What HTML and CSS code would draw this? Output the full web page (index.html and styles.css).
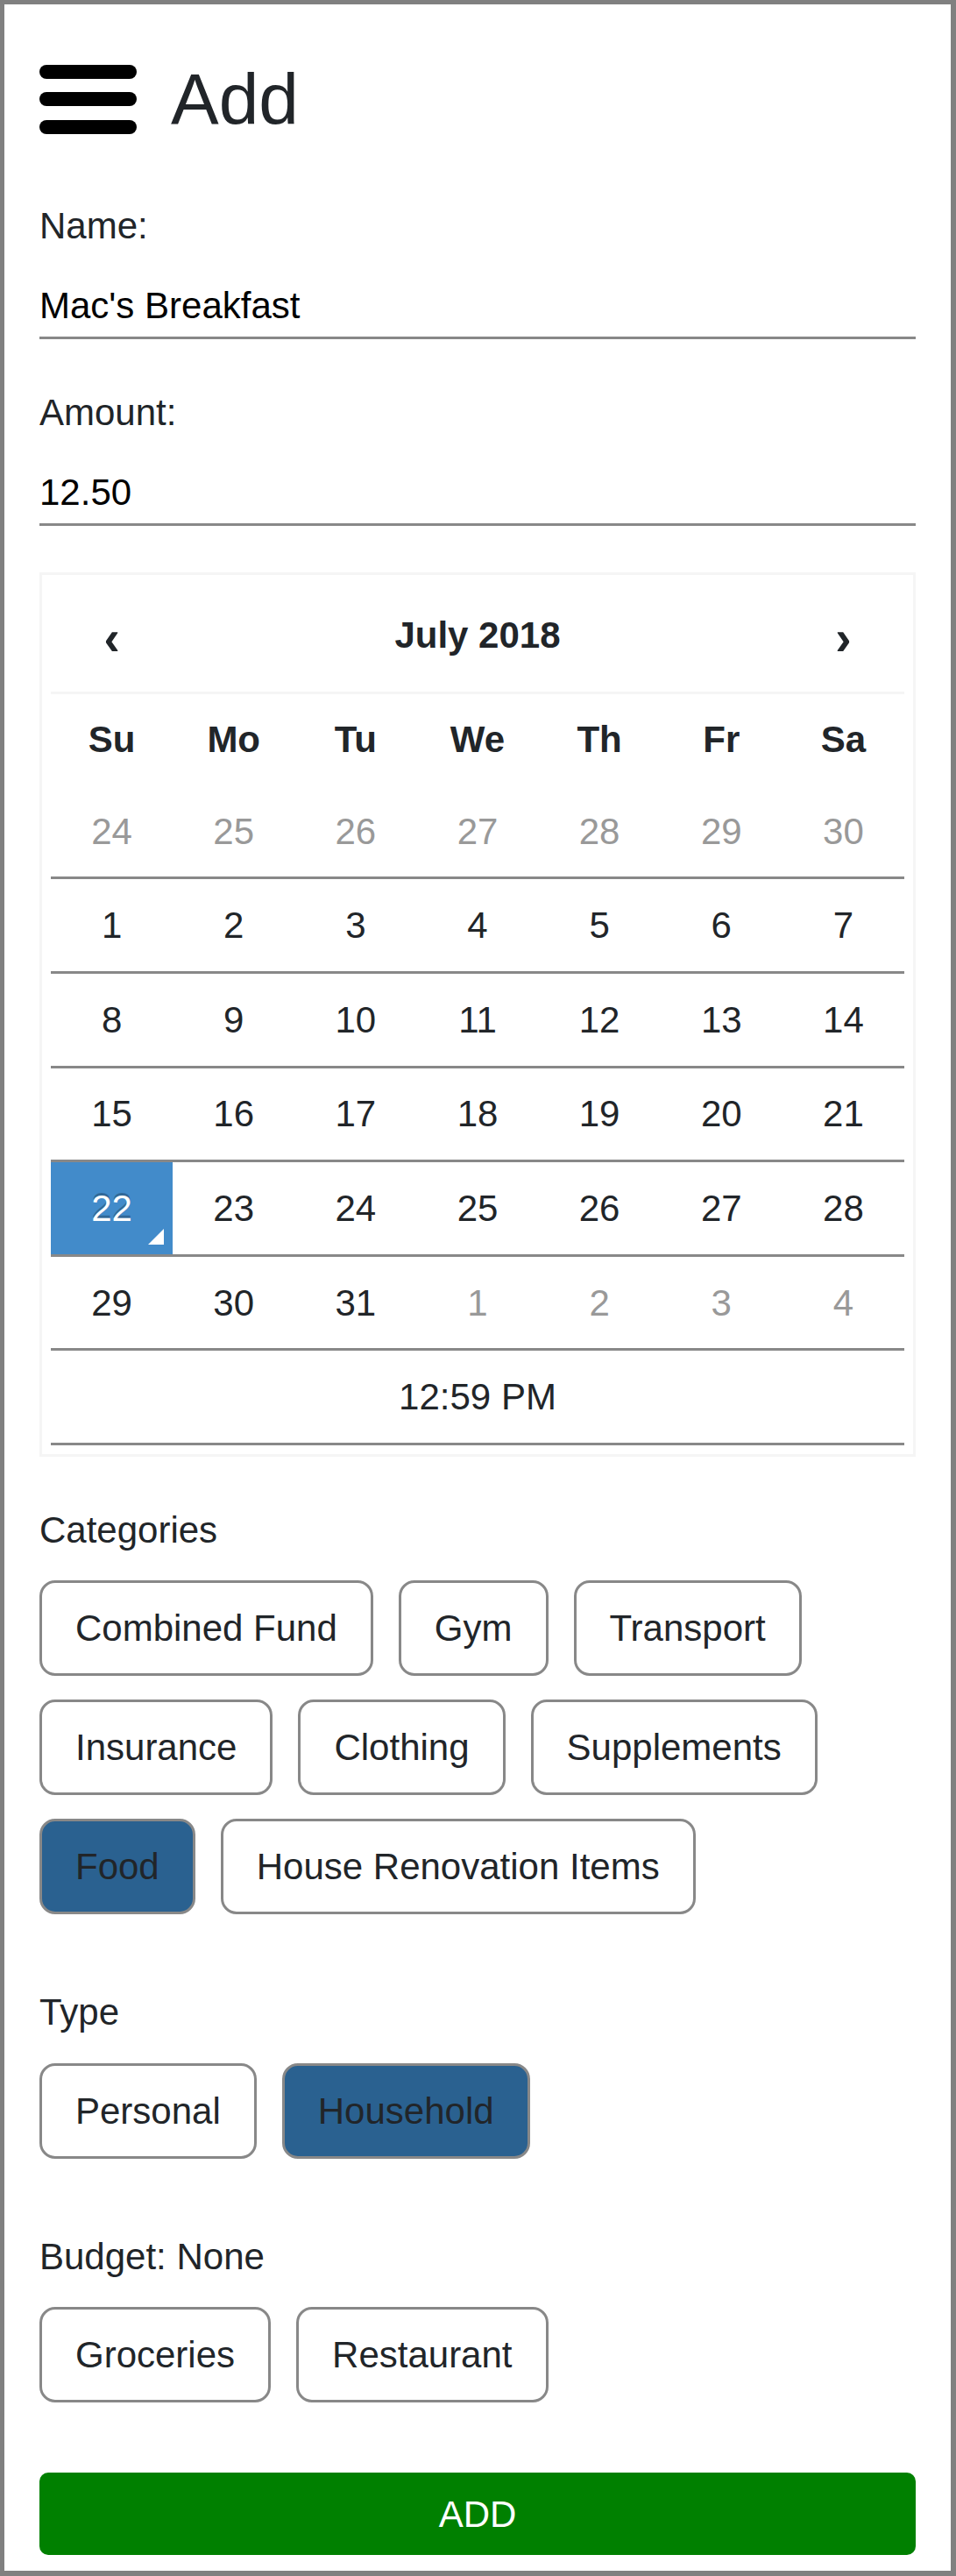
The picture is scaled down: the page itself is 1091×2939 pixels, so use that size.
FILE: index.html
```html
<!DOCTYPE html>
<html lang="en">
<head>
<meta charset="utf-8">
<title>Add</title>
<link rel="stylesheet" href="styles.css">
</head>
<body>
<div class="page">
  <header class="topbar">
    <svg class="menu-icon" width="111" height="79" viewBox="0 0 111 79" aria-hidden="true">
      <rect x="0" y="0" width="111" height="16" rx="8"/>
      <rect x="0" y="31" width="111" height="16" rx="8"/>
      <rect x="0" y="63" width="111" height="16" rx="8"/>
    </svg>
    <h1 class="title">Add</h1>
  </header>

  <div class="field-group">
    <label class="label" for="name">Name:</label>
    <input class="field" id="name" type="text" value="Mac's Breakfast">
  </div>

  <div class="field-group">
    <label class="label" for="amount">Amount:</label>
    <input class="field" id="amount" type="text" value="12.50">
  </div>

  <div class="picker">
    <div class="cal-head">
      <span class="nav">&lsaquo;</span>
      <span class="switch">July 2018</span>
      <span class="nav">&rsaquo;</span>
    </div>
    <div class="cal-dow">
      <span>Su</span><span>Mo</span><span>Tu</span><span>We</span><span>Th</span><span>Fr</span><span>Sa</span>
    </div>
    <div class="cal-week">
      <span class="day old">24</span><span class="day old">25</span><span class="day old">26</span><span class="day old">27</span><span class="day old">28</span><span class="day old">29</span><span class="day old">30</span>
    </div>
    <div class="cal-week">
      <span class="day">1</span><span class="day">2</span><span class="day">3</span><span class="day">4</span><span class="day">5</span><span class="day">6</span><span class="day">7</span>
    </div>
    <div class="cal-week">
      <span class="day">8</span><span class="day">9</span><span class="day">10</span><span class="day">11</span><span class="day">12</span><span class="day">13</span><span class="day">14</span>
    </div>
    <div class="cal-week">
      <span class="day">15</span><span class="day">16</span><span class="day">17</span><span class="day">18</span><span class="day">19</span><span class="day">20</span><span class="day">21</span>
    </div>
    <div class="cal-week">
      <span class="day active today">22</span><span class="day">23</span><span class="day">24</span><span class="day">25</span><span class="day">26</span><span class="day">27</span><span class="day">28</span>
    </div>
    <div class="cal-week">
      <span class="day">29</span><span class="day">30</span><span class="day">31</span><span class="day old">1</span><span class="day old">2</span><span class="day old">3</span><span class="day old">4</span>
    </div>
    <div class="cal-time">12:59 PM</div>
  </div>

  <div class="group">
    <div class="label">Categories</div>
    <div class="chips">
      <button class="chip">Combined Fund</button>
      <button class="chip">Gym</button>
      <button class="chip">Transport</button>
      <button class="chip">Insurance</button>
      <button class="chip">Clothing</button>
      <button class="chip">Supplements</button>
      <button class="chip selected">Food</button>
      <button class="chip">House Renovation Items</button>
    </div>
  </div>

  <div class="group">
    <div class="label">Type</div>
    <div class="chips">
      <button class="chip">Personal</button>
      <button class="chip selected">Household</button>
    </div>
  </div>

  <div class="group">
    <div class="label">Budget: None</div>
    <div class="chips">
      <button class="chip">Groceries</button>
      <button class="chip">Restaurant</button>
    </div>
  </div>

  <button class="submit">ADD</button>
</div>
</body>
</html>
```

FILE: styles.css
```css
html, body {
  margin: 0;
  padding: 0;
  background: #ffffff;
}

body {
  font-family: "Liberation Sans", Arial, sans-serif;
  font-size: 42px;
  line-height: 63px;
  color: #212529;
}

.page {
  box-sizing: border-box;
  min-height: 100vh;
  border-style: solid;
  border-color: #808080;
  border-width: 5px 6px 6px 5px;
  padding: 59px 40px 16px 40px;
  display: flex;
  flex-direction: column;
}

/* header */
.topbar {
  display: flex;
  align-items: center;
  gap: 39px;
  margin-bottom: 63.4px;
}

.menu-icon {
  display: block;
  fill: #000000;
  flex: none;
}

.title {
  margin: 0;
  font-size: 82px;
  line-height: 98.4px;
  font-weight: 400;
  color: #212529;
}

/* text fields */
.label {
  display: block;
  font-size: 42px;
  line-height: 63px;
  color: #212529;
}

.field-group {
  margin-bottom: 52.5px;
}

.field-group .label {
  margin-bottom: 28px;
}

.field {
  display: block;
  box-sizing: content-box;
  width: 100%;
  height: 63px;
  margin: 0;
  padding: 0 0 4px 0;
  border: 0;
  border-bottom: 3px solid #888888;
  border-radius: 0;
  background: transparent;
  font-family: "Liberation Sans", Arial, sans-serif;
  font-size: 42px;
  line-height: 63px;
  color: #000000;
  outline: none;
}

/* date picker */
.picker {
  border: 3px solid #f5f5f5;
  padding: 10px;
  margin-bottom: 52px;
}

.cal-head,
.cal-dow,
.cal-week {
  display: grid;
  grid-template-columns: repeat(7, 1fr);
}

.cal-head {
  height: 123px;
  border-bottom: 3px solid #f5f5f5;
  align-items: center;
  font-weight: 700;
}

.cal-head .nav {
  text-align: center;
  font-size: 55px;
  line-height: 63px;
  padding-top: 2px;
}

.cal-head .switch {
  grid-column: span 5;
  text-align: center;
  padding-bottom: 6px;
}

.cal-dow {
  height: 104px;
  align-items: center;
  font-weight: 700;
}

.cal-dow span {
  text-align: center;
}

.day {
  position: relative;
  height: 104.6px;
  border-bottom: 3px solid #888888;
  display: flex;
  align-items: center;
  justify-content: center;
  color: #212529;
}

.day.old {
  color: #999999;
}

.day.active {
  background: #428bca;
  color: #ffffff;
  text-shadow: 0 -2.6px 0 rgba(0, 0, 0, 0.25);
}

.day.today::before {
  content: "";
  position: absolute;
  right: 10px;
  bottom: 10.5px;
  border-left: 18px solid transparent;
  border-bottom: 18px solid #ffffff;
}

.cal-time {
  height: 104.6px;
  border-bottom: 3px solid #888888;
  display: flex;
  align-items: center;
  justify-content: center;
}

/* chip groups */
.group {
  margin-bottom: 53px;
}

.group .label {
  margin-bottom: 26.5px;
}

.chips {
  display: flex;
  flex-wrap: wrap;
  gap: 27px 29px;
  padding-bottom: 27px;
}

.chip {
  box-sizing: border-box;
  margin: 0;
  padding: 20px 38px;
  border: 3px solid #888888;
  border-radius: 18px;
  background: #ffffff;
  font-family: "Liberation Sans", Arial, sans-serif;
  font-size: 42px;
  line-height: 63px;
  color: #212529;
  cursor: pointer;
}

.chip.selected {
  background: #2a6190;
}

/* submit */
.submit {
  display: block;
  width: 100%;
  height: 94px;
  margin: 0;
  padding: 0;
  border: 0;
  border-radius: 10px;
  background: #008000;
  color: #ffffff;
  font-family: "Liberation Sans", Arial, sans-serif;
  font-size: 42px;
  line-height: 63px;
  cursor: pointer;
}
```
